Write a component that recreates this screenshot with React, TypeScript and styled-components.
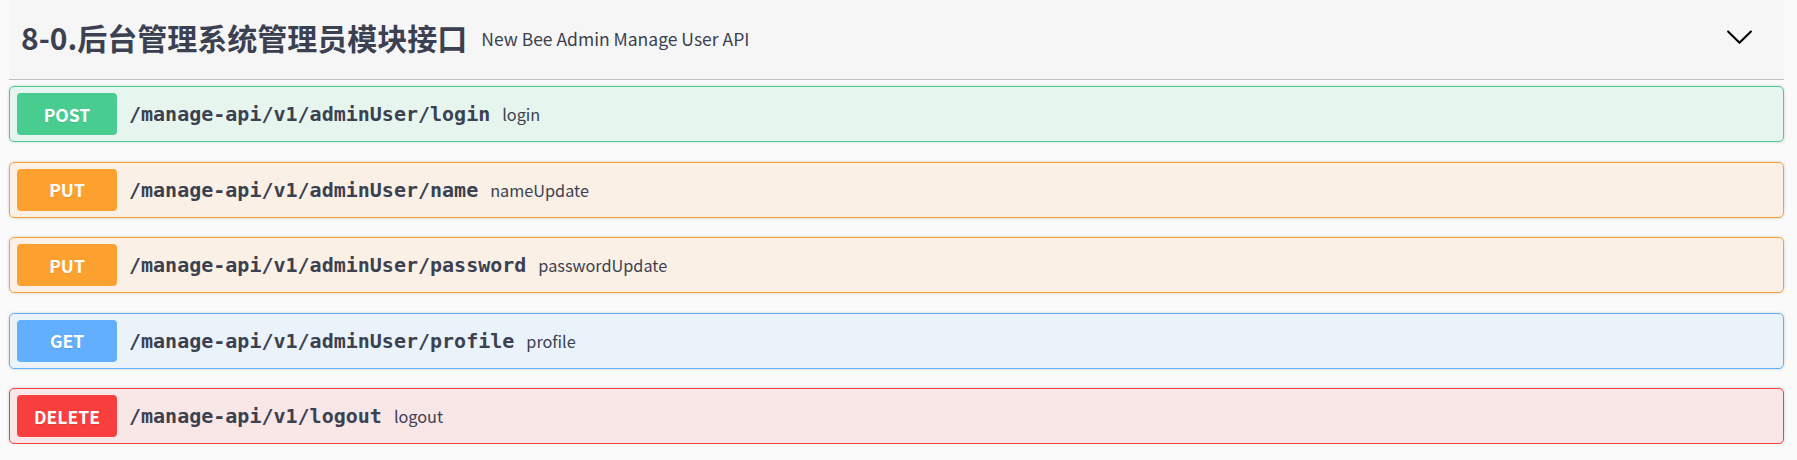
import React from "react";
import styled, { createGlobalStyle } from "styled-components";

const Global = createGlobalStyle`
  html, body { margin: 0; padding: 0; background: #fafafa; }
  body { font-family: "Noto Sans CJK SC", sans-serif; color: #3b4151; }
`;

type Method = "post" | "put" | "get" | "delete";

const palette: Record<Method, { main: string; bg: string }> = {
  post: { main: "#49cc90", bg: "rgba(73,204,144,.1)" },
  put: { main: "#fca130", bg: "rgba(252,161,48,.1)" },
  get: { main: "#61affe", bg: "rgba(97,175,254,.1)" },
  delete: { main: "#f93e3e", bg: "rgba(249,62,62,.1)" },
};

const Page = styled.div`
  padding: 0 13px 0 9px;
`;

const TagHeader = styled.h3`
  margin: 0;
  height: 73px;
  display: flex;
  align-items: center;
  padding: 0 0 6px 12px;
  background: #f6f6f6;
  border-bottom: 1px solid rgba(59, 65, 81, 0.3);
  box-sizing: content-box;
`;

const TagTitle = styled.span`
  font-family: "Noto Sans CJK SC", sans-serif;
  font-size: 30px;
  font-weight: 700;
  color: #3b4151;
  white-space: nowrap;
`;

const TagDesc = styled.small`
  flex: 1;
  font-family: "Noto Sans CJK SC", sans-serif;
  font-size: 17.5px;
  font-weight: 400;
  color: #3b4151;
  padding: 3px 14px 0;
`;

const Expand = styled.button`
  border: none;
  background: none;
  padding: 0;
  margin: 0 30px 0 0;
  width: 29px;
  height: 29px;
  display: flex;
  svg { display: block; }
`;

const List = styled.div`
  padding-top: 6px;
  display: flex;
  flex-direction: column;
  gap: 19.6px;
`;

const Block = styled.div<{ $m: Method }>`
  display: flex;
  align-items: center;
  padding: 6px 7px;
  border: 1px solid ${(p) => palette[p.$m].main};
  background: ${(p) => palette[p.$m].bg};
  border-radius: 5px;
  box-shadow: 0 0 3px rgba(0, 0, 0, 0.19);
`;

const MethodBadge = styled.span<{ $m: Method }>`
  width: 100px;
  height: 42px;
  display: flex;
  align-items: center;
  justify-content: center;
  border-radius: 4px;
  background: ${(p) => palette[p.$m].main};
  color: #fff;
  font-family: "Noto Sans CJK SC", sans-serif;
  font-weight: 700;
  font-size: 17.5px;
  text-shadow: 0 1px 0 rgba(0, 0, 0, 0.1);
`;

const Path = styled.span`
  font-family: "DejaVu Sans Mono", monospace;
  font-weight: 700;
  font-size: 20px;
  color: #3b4151;
  padding: 0 12px 0 12px;
`;

const Summary = styled.span`
  font-family: "Noto Sans CJK SC", sans-serif;
  font-size: 16.25px;
  color: #3b4151;
`;

const ops: { m: Method; path: string; desc: string }[] = [
  { m: "post", path: "/manage-api/v1/adminUser/login", desc: "login" },
  { m: "put", path: "/manage-api/v1/adminUser/name", desc: "nameUpdate" },
  { m: "put", path: "/manage-api/v1/adminUser/password", desc: "passwordUpdate" },
  { m: "get", path: "/manage-api/v1/adminUser/profile", desc: "profile" },
  { m: "delete", path: "/manage-api/v1/logout", desc: "logout" },
];

export default function App() {
  return (
    <Page>
      <Global />
      <TagHeader>
        <TagTitle>8-0.后台管理系统管理员模块接口</TagTitle>
        <TagDesc>New Bee Admin Manage User API</TagDesc>
        <Expand aria-label="collapse">
          <svg width="29" height="29" viewBox="0 0 20 20">
            <path
              fill="#000"
              d="M17.418 6.109c.272-.268.709-.268.979 0s.271.701 0 .969l-7.908 7.83c-.27.268-.707.268-.979 0l-7.908-7.83c-.27-.268-.27-.701 0-.969.271-.268.709-.268.979 0L10 13.25l7.418-7.141z"
            />
          </svg>
        </Expand>
      </TagHeader>
      <List>
        {ops.map((o, i) => (
          <Block key={i} $m={o.m}>
            <MethodBadge $m={o.m}>{o.m.toUpperCase()}</MethodBadge>
            <Path>{o.path}</Path>
            <Summary>{o.desc}</Summary>
          </Block>
        ))}
      </List>
    </Page>
  );
}
